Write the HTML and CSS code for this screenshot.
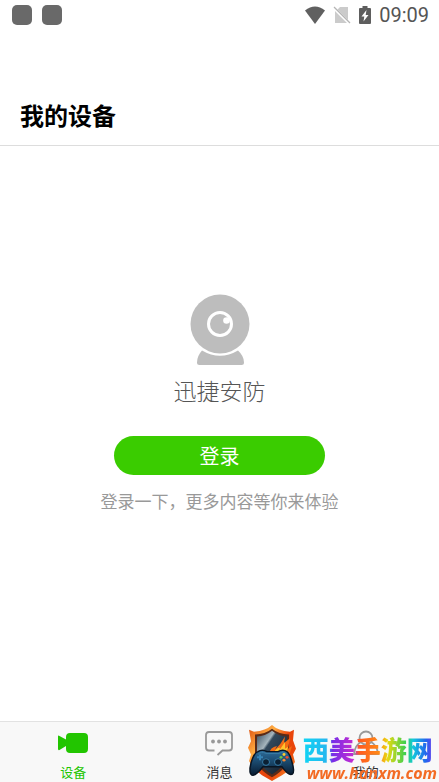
FILE: index.html
```html
<!DOCTYPE html>
<html lang="zh-CN">
<head>
  <meta charset="UTF-8" />
  <meta name="viewport" content="width=device-width, initial-scale=1.0"/>
  <title>我的设备</title>
  <link rel="stylesheet" href="styles.css">
</head>
<body>
  <div class="status-bar">
    <span class="notice"></span>
    <span class="notice"></span>
    <div class="status-icons">
      <svg width="20" height="18" viewBox="0 0 22 18" preserveAspectRatio="none"><path d="M0 4.500Q11-3.500 22 4.500L11 18Z" fill="#606060"/></svg>
      <svg width="18" height="18" viewBox="0 0 18 18"><path d="M7 1h8v13L4.500 3.500zM2 5l12 12H2z" fill="#cbcbcb"/><path d="M1 1l16 16" stroke="#b5b5b5" stroke-width="1.300"/></svg>
      <svg width="12" height="18" viewBox="0 0 12 18"><path d="M3.500 0h5v2H11q1 0 1 1v14q0 1-1 1H1q-1 0-1-1V3q0-1 1-1h2.500z" fill="#5e5e5e"/><path d="M7.500 4L2.500 10.500h2.800L4.500 15.500l5-6.500H6.700z" fill="#fff"/></svg>
    </div>
    <span class="time">09:09</span>
  </div>
  <header class="header">
    <h1>我的设备</h1>
  </header>
  <main class="content">
    <svg class="camera" width="60" height="72" viewBox="0 0 60 72">
      <path d="M12 56.500Q30 67 48 56.500Q54 62 54 68.500Q54 71 51.500 71H9.500Q7 71 7 68.500Q7 62 12 56.500Z" fill="#bdbdbd"/>
      <circle cx="30" cy="30" r="31" fill="#fff"/>
      <circle cx="30" cy="30" r="29.500" fill="#bdbdbd"/>
      <circle cx="30" cy="30" r="11.500" fill="none" stroke="#fff" stroke-width="3"/>
      <circle cx="36.500" cy="26.500" r="3.300" fill="#fff"/>
    </svg>
    <p class="brand">迅捷安防</p>
    <button class="login">登录</button>
    <p class="hint">登录一下，更多内容等你来体验</p>
  </main>
  <nav class="tabs">
    <a class="tab active" href="#devices">
      <svg width="30" height="26" viewBox="0 0 30 26"><path d="M0 6.500Q0 5 1.500 6L8 9.500V7Q8 3 12 3H26Q30 3 30 7V19Q30 23 26 23H12Q8 23 8 19V16L1.500 20Q0 20.500 0 19Z" fill="#22c500"/></svg>
      <span>设备</span>
    </a>
    <a class="tab" href="#messages">
      <svg width="30" height="26" viewBox="0 0 30 26"><path d="M10.500 20.500H5Q2 20.500 2 17.500V5Q2 2 5 2H25Q28 2 28 5V17.500Q28 20.500 25 20.500H18.500L13.500 25" fill="none" stroke="#999" stroke-width="1.800"/><g fill="#999"><circle cx="9" cy="11.500" r="1.900"/><circle cx="15" cy="11.500" r="1.900"/><circle cx="21" cy="11.500" r="1.900"/></g></svg>
      <span>消息</span>
    </a>
    <a class="tab" href="#mine">
      <svg width="30" height="26" viewBox="0 0 30 26"><g fill="none" stroke="#999" stroke-width="1.800"><circle cx="15" cy="8" r="6.500"/><path d="M10 12Q4 15 3 24H27Q26 15 20 12"/></g></svg>
      <span>我的</span>
    </a>
  </nav>
  <div class="watermark">
    <svg width="50" height="57" viewBox="0 0 50 60" preserveAspectRatio="none">
      <defs>
        <linearGradient id="fire" x1="0" y1="0" x2="1" y2="1"><stop offset="0" stop-color="#d9480b"/><stop offset=".3" stop-color="#ffad42"/><stop offset=".5" stop-color="#e9450b"/><stop offset=".7" stop-color="#e9450b"/><stop offset="1" stop-color="#ffb13a"/></linearGradient>
        <linearGradient id="steel" x1="0" y1="0" x2="1" y2="1"><stop offset="0" stop-color="#314657"/><stop offset=".3" stop-color="#a6b5bd"/><stop offset=".35" stop-color="#32485b"/><stop offset="1" stop-color="#101c2a"/></linearGradient>
        <linearGradient id="pad" x1="0" y1="0" x2="0" y2="1"><stop offset="0" stop-color="#2d6d9c"/><stop offset=".5" stop-color="#194669"/><stop offset="1" stop-color="#071a30"/></linearGradient>
      </defs>
      <path d="M25 0Q31 6 43 7L47 5L46 16L49 25L46 31L48 39L42 48L35 53L25 59L15 53L7 46L2 38L4 31L1 24L4 17L2 5L7 7Q19 6 25 0Z" fill="url(#fire)"/>
      <path d="M25 4Q32 10 42 10V28Q42 46 25 55Q8 46 8 28V10Q18 10 25 4Z" fill="#5b2b18"/>
      <path d="M25 6Q32 12 40 12V28Q40 43 25 52Q10 43 10 28V12Q18 12 25 6Z" fill="url(#steel)"/>
      <path d="M22 31Q23 23 30 22L28 26Q34 20 38 12L37 19L43 14L41 25L45 22L42 33Z" fill="#f26b14"/>
      <path d="M27 29Q29 24 33 24L32 27L38 18L38 25L41 23L39 31Z" fill="#ffc42e"/>
      <path d="M11 28Q15 25 20 28H31Q36 25 40 28Q43 30 46 43Q48 53 43 52Q40 51 35 44H16Q10 52 6 53Q1 52 4 40Q7 29 11 28Z" fill="url(#pad)" stroke="#081523" stroke-width="1.500"/>
      <path d="M11 31Q14 27 19 30H32Q37 27 40 31" fill="none" stroke="#397ba4"/>
      <path d="M13 31v6M10 34h6" stroke="#3684b6" stroke-width="2"/>
      <circle cx="19" cy="39" r="3.500" fill="#0b2033" stroke="#377da9"/><circle cx="31" cy="39" r="3.500" fill="#0b2033" stroke="#377da9"/>
      <circle cx="37" cy="31" r="1.500" fill="#ffc931"/><circle cx="40" cy="34" r="1.500" fill="#f04b2d"/><circle cx="37" cy="37" r="1.500" fill="#f18b32"/><circle cx="34" cy="34" r="1.500" fill="#6fc348"/>
    </svg>
    <div class="site">
      <span class="site-name">西美手游网</span>
      <span class="site-url">www.hanxm.com</span>
    </div>
  </div>
</body>
</html>
```
FILE: styles.css
```css
:root {
  --green: #3acc00;
  --tab-green: #22c500;
}
* {
  box-sizing: border-box;
}
body {
  margin: 0;
  min-height: 100vh;
  display: flex;
  flex-direction: column;
  background: #fff;
  font-family: "Noto Sans CJK SC", sans-serif;
}
h1, p {
  margin: 0;
}
svg {
  display: block;
  flex-shrink: 0;
}
.status-bar {
  display: flex;
  align-items: center;
  height: 30px;
  padding: 0 10px 0 12px;
}
.notice {
  width: 20px;
  height: 20px;
  margin-right: 10px;
  border-radius: 5px;
  background: #696969;
}
.status-icons {
  display: flex;
  gap: 8px;
  margin-left: auto;
}
.time {
  margin-left: 8px;
  font-family: Roboto, sans-serif;
  font-size: 20px;
  line-height: 24px;
  font-weight: 400;
  color: #555;
}
.header {
  height: 116px;
  padding: 67px 20px 0;
  border-bottom: 1px solid #ddd;
}
.header h1 {
  font-size: 24px;
  line-height: 36px;
  font-weight: 700;
  color: #000;
}
.content {
  flex: 1;
  display: flex;
  flex-direction: column;
  align-items: center;
  padding-top: 148px;
}
.brand {
  margin-top: 8px;
  font-size: 23px;
  line-height: 32px;
  font-weight: 300;
  color: #555;
}
.login {
  width: 48%;
  height: 39px;
  margin-top: 30px;
  padding: 0;
  border: none;
  border-radius: 20px;
  background: var(--green);
  color: #fff;
  font-family: inherit;
  font-size: 20px;
  cursor: pointer;
}
.hint {
  margin-top: 14px;
  font-size: 17px;
  line-height: 24px;
  font-weight: 400;
  color: #999;
}
.tabs {
  display: flex;
  border-top: 1px solid #e2e2e2;
  background: #f8f8f8;
}
.tab {
  flex: 1;
  display: flex;
  flex-direction: column;
  align-items: center;
  gap: 6px;
  height: 60px;
  padding-top: 8px;
  font-size: 13px;
  line-height: 20px;
  color: #333;
  text-decoration: none;
}
.tab.active {
  color: var(--tab-green);
}
.watermark {
  position: fixed;
  right: 2px;
  bottom: 0;
  display: flex;
  align-items: flex-end;
  gap: 6px;
  pointer-events: none;
}
.site {
  display: flex;
  flex-direction: column;
}
.site-name {
  font-size: 26px;
  line-height: 30px;
  font-weight: 900;
  color: transparent;
  background: linear-gradient(90deg, #10d5f4 0%, #26b6ef 18%, #762ee8 22%, #c52bd1 38%, #ff5b20 42%, #ff8a16 57%, #e8d910 63%, #35cf52 77%, #12c9dc 82%, #2463ef 92%, #9b2ee9 100%);
  background-clip: text;
}
.site-url {
  padding-left: 4px;
  font-family: "Open Sans", sans-serif;
  font-size: 16px;
  line-height: 18px;
  font-weight: 700;
  font-style: italic;
  color: #f36b24;
}
```
